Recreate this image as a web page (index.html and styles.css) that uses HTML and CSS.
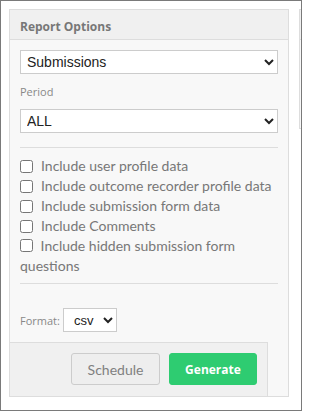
FILE: index.html
```html
<!DOCTYPE html>
<html>
<head>
<meta charset="utf-8">
<link rel="stylesheet" href="styles.css">
</head>
<body>
<div class="frame">
  <div class="panel">
    <div class="panel-head">Report Options</div>
    <div class="panel-body">
      <select class="sel">
        <option>Submissions</option>
      </select>
      <div class="label">Period</div>
      <select class="sel">
        <option>ALL</option>
      </select>
      <div class="rule rule-top"></div>
      <label class="check"><input type="checkbox"><span>Include user profile data</span></label>
      <label class="check"><input type="checkbox"><span>Include outcome recorder profile data</span></label>
      <label class="check"><input type="checkbox"><span>Include submission form data</span></label>
      <label class="check"><input type="checkbox"><span>Include Comments</span></label>
      <label class="check wrap"><input type="checkbox"> Include hidden submission form questions</label>
      <div class="rule rule-bottom"></div>
      <div class="format">
        <span class="format-label">Format:</span>
        <select class="sel sel-small">
          <option>csv</option>
        </select>
      </div>
    </div>
    <div class="panel-foot">
      <button class="btn btn-default">Schedule</button>
      <button class="btn btn-green">Generate</button>
    </div>
  </div>
  <div class="side">
    <div class="side-head"></div>
  </div>
</div>
</body>
</html>
```

FILE: styles.css
```css
html, body {
  margin: 0;
  padding: 0;
  background: #ffffff;
}

.frame {
  box-sizing: border-box;
  width: 302px;
  height: 411px;
  border: 1px solid #7a7a7a;
  background: #ffffff;
  display: flex;
  align-items: flex-start;
  padding: 8px 0 0 8px;
}

.panel {
  box-sizing: border-box;
  width: 280px;
  height: 388px;
  border: 1px solid #dddddd;
  background: #f8f8f8;
  display: flex;
  flex-direction: column;
}

.panel-head {
  box-sizing: border-box;
  height: 30px;
  padding: 3px 10px 0 10px;
  display: flex;
  align-items: center;
  background: #f0f0f0;
  border-bottom: 1px solid #dddddd;
  font-family: "Open Sans", sans-serif;
  font-weight: 700;
  font-size: 12px;
  color: #777777;
}

.panel-body {
  padding: 10px 10px 10px 10px;
  display: flex;
  flex-direction: column;
}

.sel {
  box-sizing: border-box;
  width: 258px;
  height: 24px;
  border: 1px solid #cccccc;
  border-radius: 0;
  background: #ffffff;
  font-family: "Liberation Sans", Arial, sans-serif;
  font-size: 14px;
  color: #222222;
  padding: 0 2px;
  margin: 0;
}

.label {
  margin-top: 10px;
  margin-bottom: 9px;
  line-height: 16px;
  font-family: "Open Sans", sans-serif;
  font-size: 11px;
  color: #888888;
}

.rule {
  height: 1px;
  background: #dddddd;
}

.rule-top {
  margin-top: 14px;
  margin-bottom: 8px;
}

.rule-bottom {
  margin-top: 7px;
  margin-bottom: 24px;
}

.check {
  display: flex;
  align-items: center;
  gap: 8px;
  line-height: 20px;
  font-family: Lato, sans-serif;
  font-size: 14px;
  color: #777777;
}

.check input {
  margin: 0;
  width: 13px;
  height: 13px;
  flex: none;
}

.check.wrap {
  display: block;
}

.check.wrap input {
  vertical-align: -1px;
  margin-right: 4px;
}

.format {
  display: flex;
  align-items: center;
  gap: 3px;
}

.format-label {
  font-family: "Open Sans", sans-serif;
  font-size: 11px;
  color: #888888;
}

.sel-small {
  width: 54px;
  font-family: "Liberation Sans", Arial, sans-serif;
  font-size: 13px;
  padding-left: 6px;
}

.panel-foot {
  box-sizing: border-box;
  width: 258px;
  height: 54px;
  margin-top: auto;
  background: #f0f0f0;
  border-top: 1px solid #dddddd;
  border-right: 1px solid #dddddd;
  display: flex;
  justify-content: flex-end;
  align-items: flex-start;
  gap: 9px;
  padding: 10px 10px 0 0;
}

.btn {
  box-sizing: border-box;
  height: 32px;
  border-radius: 3px;
  margin: 0;
  cursor: pointer;
}

.btn-default {
  width: 89px;
  border: 1px solid #cccccc;
  background: #eeeeee;
  font-family: Lato, sans-serif;
  font-size: 14px;
  color: #808080;
}

.btn-green {
  width: 88px;
  border: 1px solid #2ecc71;
  background: #2ecc71;
  font-family: "Open Sans", sans-serif;
  font-weight: 700;
  font-size: 12px;
  color: #ffffff;
}

.side {
  box-sizing: border-box;
  margin-left: 10px;
  width: 2px;
  height: 120px;
  border-left: 1px solid #dddddd;
  border-top: 1px solid #dddddd;
  border-bottom: 1px solid #dddddd;
  background: #f8f8f8;
}

.side-head {
  height: 29px;
  background: #f0f0f0;
  border-bottom: 1px solid #dddddd;
}
```
